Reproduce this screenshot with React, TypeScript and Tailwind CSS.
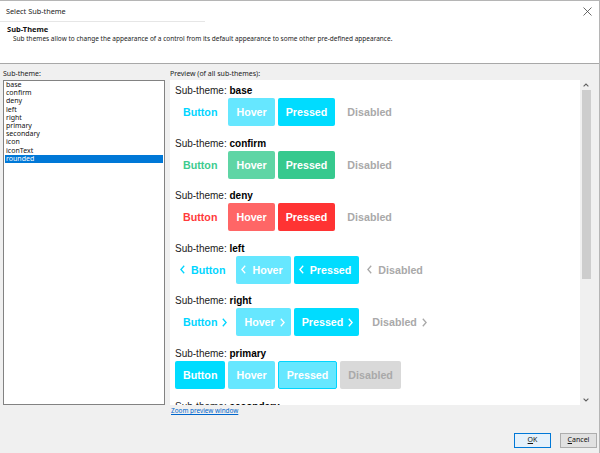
import type { ReactNode } from 'react'

type Palette = {
  text: string
  hoverBg: string
  pressedBg: string
}

const CYAN: Palette = { text: 'text-[#00d5ff]', hoverBg: 'bg-[#66e7ff]', pressedBg: 'bg-[#00dcff]' }
const GREEN: Palette = { text: 'text-[#3dcb8f]', hoverBg: 'bg-[#5fd5a5]', pressedBg: 'bg-[#36c98e]' }
const RED: Palette = { text: 'text-[#ff3b3b]', hoverBg: 'bg-[#ff6666]', pressedBg: 'bg-[#ff3333]' }

const LIST = ['base', 'confirm', 'deny', 'left', 'right', 'primary', 'secondary', 'icon', 'iconText', 'rounded']

function Chevron({ dir }: { dir: 'left' | 'right' }) {
  return (
    <svg width="5" height="9" viewBox="0 0 5 9" fill="none" stroke="currentColor" strokeWidth="1.3" className="shrink-0">
      {dir === 'left' ? <path d="M4.2 0.8 L0.9 4.5 L4.2 8.2" /> : <path d="M0.8 0.8 L4.1 4.5 L0.8 8.2" />}
    </svg>
  )
}

function Btn({ className, children }: { className: string; children: ReactNode }) {
  return (
    <div className={`h-[28px] flex items-center rounded-[2px] text-[10.7px] font-bold ${className}`}>
      {children}
    </div>
  )
}

function Row({ name, children }: { name: string; children: ReactNode }) {
  return (
    <div className="flex flex-col gap-[1px]">
      <div className="h-[12px] leading-[12px] text-[10px] text-[#222]">
        Sub-theme: <span className="font-bold text-black">{name}</span>
      </div>
      <div className="flex gap-[3px]">{children}</div>
    </div>
  )
}

function Standard({ name, p }: { name: string; p: Palette }) {
  return (
    <Row name={name}>
      <Btn className={`px-[8px] ${p.text}`}>Button</Btn>
      <Btn className={`px-[8px] ${p.hoverBg} text-white`}>Hover</Btn>
      <Btn className={`px-[8px] ${p.pressedBg} text-white`}>Pressed</Btn>
      <Btn className="pl-[9px] pr-[8px] text-[#a9a9a9]">Disabled</Btn>
    </Row>
  )
}

export default function App() {
  const left = 'pl-[5px] pr-[8px] gap-[6px]'
  const right = 'pl-[8px] pr-[6px] gap-[5px]'
  return (
    <div
      className="w-[600px] h-[453px] bg-[#f0f0f0] flex flex-col border-t border-r border-[#b5b5b5] overflow-hidden"
      style={{ fontFamily: '"Noto Sans", "Open Sans", sans-serif' }}
    >
      {/* header */}
      <div className="h-[63px] bg-white border-b border-[#a8a8a8] flex flex-col">
        <div className="h-[20px] flex items-center justify-between pl-[6px] pr-[7px]">
          <span className="text-[7.3px] text-[#222]">Select Sub-theme</span>
          <svg width="9" height="9" viewBox="0 0 9 9" stroke="#444" strokeWidth="0.8">
            <path d="M0.5 0.5 L8.5 8.5 M8.5 0.5 L0.5 8.5" />
          </svg>
        </div>
        <div className="w-[205px] h-px bg-[#e6e6e6]" />
        <div className="pl-[7px] pt-[2px] text-[7.5px] font-bold text-[#111] leading-[10px]">Sub-Theme</div>
        <div className="pl-[13px] text-[6.5px] text-[#222] leading-[10px]">
          Sub themes allow to change the appearance of a control from its default appearance to some other pre-defined appearance.
        </div>
      </div>

      {/* body */}
      <div className="flex gap-[5px] pl-[3px] pr-[7px] pt-[5px]">
        <div className="w-[162px] flex flex-col">
          <div className="h-[10px] leading-[10px] text-[7px] text-[#222]">Sub-theme:</div>
          <div className="mt-[1px] h-[325px] bg-white border border-[#828282] flex flex-col">
            {LIST.map(item => (
              <div
                key={item}
                className={`h-[8.2px] leading-[8.2px] text-[7px] pl-[1px] mx-[1px] ${
                  item === 'rounded' ? 'bg-[#0078d7] text-white' : 'text-[#111]'
                }`}
              >
                {item}
              </div>
            ))}
          </div>
        </div>

        <div className="flex-1 flex flex-col">
          <div className="h-[10px] leading-[10px] text-[7px] text-[#222]">Preview (of all sub-themes):</div>
          <div className="mt-[1px] h-[325px] bg-white flex overflow-hidden">
            <div
              className="flex-1 pl-[5px] pt-[5px] flex flex-col gap-[11.6px] overflow-hidden"
              style={{ fontFamily: '"Liberation Sans", Arial, sans-serif' }}
            >
              <Standard name="base" p={CYAN} />
              <Standard name="confirm" p={GREEN} />
              <Standard name="deny" p={RED} />
              <Row name="left">
                <Btn className={`${left} ${CYAN.text}`}>
                  <Chevron dir="left" />
                  Button
                </Btn>
                <Btn className={`${left} ${CYAN.hoverBg} text-white`}>
                  <Chevron dir="left" />
                  Hover
                </Btn>
                <Btn className={`${left} ${CYAN.pressedBg} text-white`}>
                  <Chevron dir="left" />
                  Pressed
                </Btn>
                <Btn className={`${left} text-[#a9a9a9]`}>
                  <Chevron dir="left" />
                  Disabled
                </Btn>
              </Row>
              <Row name="right">
                <Btn className={`${right} ${CYAN.text}`}>
                  Button
                  <Chevron dir="right" />
                </Btn>
                <Btn className={`${right} ${CYAN.hoverBg} text-white`}>
                  Hover
                  <Chevron dir="right" />
                </Btn>
                <Btn className={`${right} ${CYAN.pressedBg} text-white`}>
                  Pressed
                  <Chevron dir="right" />
                </Btn>
                <Btn className={`${right} pl-[10px] text-[#a9a9a9]`}>
                  Disabled
                  <Chevron dir="right" />
                </Btn>
              </Row>
              <Row name="primary">
                <Btn className="px-[8px] bg-[#00dcff] text-white">Button</Btn>
                <Btn className="px-[8px] bg-[#66e7ff] text-white">Hover</Btn>
                <Btn className="px-[8px] bg-[#66e7ff] text-white border border-[#00d5ff]">Pressed</Btn>
                <Btn className="px-[8px] bg-[#d9d9d9] text-[#a9a9a9]">Disabled</Btn>
              </Row>
              <Row name="secondary">
                <Btn className="px-[8px] text-[#00d5ff] border border-[#00d5ff]">Button</Btn>
              </Row>
            </div>
            {/* scrollbar */}
            <div className="w-[12px] bg-[#f0f0f0] flex flex-col items-center">
              <div className="h-[10px] flex items-center justify-center">
                <svg width="6" height="4" viewBox="0 0 6 4" fill="none" stroke="#606060" strokeWidth="1.1">
                  <path d="M0.6 3.4 L3 1 L5.4 3.4" />
                </svg>
              </div>
              <div className="w-[9px] h-[189px] bg-[#cdcdcd]" />
              <div className="flex-1" />
              <div className="h-[10px] flex items-center justify-center">
                <svg width="6" height="4" viewBox="0 0 6 4" fill="none" stroke="#606060" strokeWidth="1.1">
                  <path d="M0.6 0.6 L3 3 L5.4 0.6" />
                </svg>
              </div>
            </div>
          </div>
          <div className="h-[12px] flex items-center text-[6.4px] text-[#0066cc] underline pl-[1px]">
            Zoom preview window
          </div>
        </div>
      </div>

      {/* footer */}
      <div className="flex-1 flex items-end justify-end gap-[9px] pr-[2px] pb-[5px]">
        <button className="w-[37px] h-[15px] flex items-center justify-center bg-[#e5f1fb] border border-[#0078d7] text-[7px] text-[#111]">
          <span className="underline">O</span>K
        </button>
        <button className="w-[37px] h-[15px] flex items-center justify-center bg-[#e1e1e1] border border-[#adadad] text-[7px] text-[#111]">
          <span className="underline">C</span>ancel
        </button>
      </div>
    </div>
  )
}
